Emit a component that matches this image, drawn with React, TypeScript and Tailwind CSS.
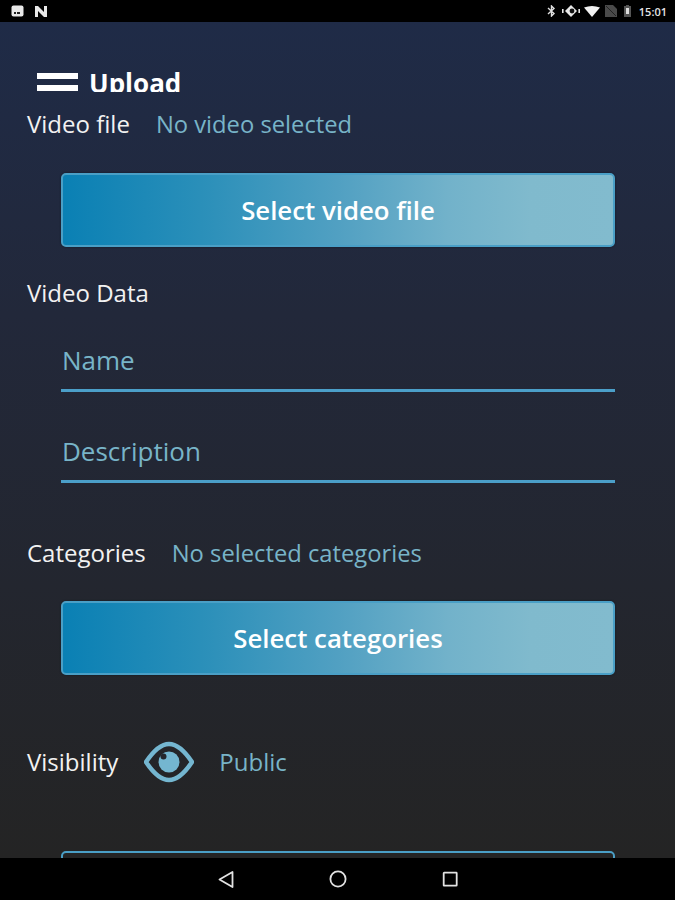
const font = { fontFamily: '"Open Sans", "Noto Sans", sans-serif' };

function StatusBar() {
  return (
    <div className="flex h-[22px] shrink-0 items-center justify-between bg-black pl-[11px] pr-[8px]">
      <div className="flex items-center gap-[10px]">
        <svg width="13" height="12" viewBox="0 0 13 12">
          <rect x="0.5" y="0.5" width="12" height="11" rx="2" fill="#e8e8e8" />
          <rect x="3" y="7" width="2" height="2" fill="#222" />
          <rect x="6" y="7" width="3" height="2" fill="#222" />
        </svg>
        <svg width="14" height="11" viewBox="0 0 14 11">
          <path d="M1 11V0h3l6 6V0h3v11h-3L4 5v6z" fill="#e8e8e8" />
        </svg>
      </div>
      <div className="flex items-center">
        <svg width="9" height="12" viewBox="0 0 9 12" fill="none" stroke="#e0e0e0" strokeWidth="1.4">
          <path d="M1 3l6 5.5L4.5 11V1L7 3.5 1 9" />
        </svg>
        <svg className="ml-[6px]" width="18" height="14" viewBox="0 0 18 14">
          <path d="M9 1l6 6-6 6-6-6z" fill="#e8e8e8" />
          <circle cx="10" cy="7" r="2.4" fill="#111" />
          <rect x="0" y="5" width="1.6" height="4" fill="#e8e8e8" />
          <rect x="16.4" y="5" width="1.6" height="4" fill="#e8e8e8" />
        </svg>
        <svg className="ml-[4px]" width="16" height="11" viewBox="0 0 16 11">
          <path d="M0 1.5Q8 -1.5 16 1.5L8 11z" fill="#f2f2f2" />
        </svg>
        <svg className="ml-[5px]" width="12" height="12" viewBox="0 0 12 12">
          <path d="M0 12V0h8l4 4v8z" fill="#4a4a4a" />
          <path d="M1 1l10 10" stroke="#222" strokeWidth="1" />
        </svg>
        <svg className="ml-[7px]" width="7" height="12" viewBox="0 0 7 12">
          <rect x="0" y="1" width="7" height="11" fill="#555" />
          <rect x="2" y="0" width="3" height="1" fill="#555" />
          <rect x="2" y="3" width="3" height="6" fill="#ddd" />
        </svg>
        <span className="ml-[8px] text-[11px] font-semibold leading-none text-[#e4e4e4]" style={font}>
          15:01
        </span>
      </div>
    </div>
  );
}

function NavBar() {
  return (
    <div className="flex h-[42px] shrink-0 items-center justify-center gap-[94px] bg-black pl-[1px]">
      <svg width="18" height="18" viewBox="0 0 18 18" fill="none" stroke="#e2e2e2" strokeWidth="1.8" strokeLinejoin="round">
        <path d="M15.5 2v15L2.5 9.5z" />
      </svg>
      <svg width="18" height="18" viewBox="0 0 18 18" fill="none" stroke="#e2e2e2" strokeWidth="1.8">
        <circle cx="9" cy="9" r="7.6" />
      </svg>
      <svg width="18" height="18" viewBox="0 0 18 18" fill="none" stroke="#e2e2e2" strokeWidth="1.8">
        <rect x="2.7" y="2.7" width="13" height="13" rx="0.5" />
      </svg>
    </div>
  );
}

function GradientButton({ label }: { label: string }) {
  return (
    <button className="flex h-[74px] w-full items-center justify-center rounded-[5px] border-2 border-[#4a9fc6] bg-[linear-gradient(90deg,#0a80b4_0%,#2a8fb9_25%,#51a0c2_50%,#72b2ca_70%,#80bacd_85%,#82bbce_100%)] text-[25.8px] font-semibold text-white shadow-[0_0_2px_#11151f]">
      {label}
    </button>
  );
}

function Field({ label }: { label: string }) {
  return (
    <div className="flex h-[60px] items-center border-b-[3px] border-[#4b9fc9] pl-px text-[26px] text-[#78b4c8]">
      {label}
    </div>
  );
}

export default function App() {
  return (
    <div className="flex h-[900px] w-[675px] flex-col overflow-hidden" style={font}>
      <StatusBar />
      <main className="flex min-h-0 flex-1 flex-col overflow-hidden bg-[linear-gradient(180deg,#1f2b47_0%,#22283a_35%,#242424_100%)]">
        <header className="flex h-[70px] shrink-0 items-end overflow-hidden pl-[37px]">
          <svg className="mb-[1px]" width="41" height="18" viewBox="0 0 41 18" fill="#fff">
            <rect width="41" height="6" />
            <rect y="12" width="41" height="6" />
          </svg>
          <span className="relative top-[4px] ml-[11px] text-[26px] font-bold leading-none text-white">Upload</span>
        </header>

        <div className="flex items-center pl-[27px] pt-[12px] text-[24px] leading-[40px]">
          <span className="text-[#f2f2f2]">Video file</span>
          <span className="ml-[26px] text-[23.75px] text-[#78b4c8]">No video selected</span>
        </div>

        <div className="pl-[61px] pr-[60px] pt-[29px]">
          <GradientButton label="Select video file" />
        </div>

        <div className="pl-[27px] pt-[26px] text-[24px] leading-[40px] text-[#f2f2f2]">Video Data</div>

        <div className="flex flex-col gap-[31px] pl-[61px] pr-[60px] pt-[19px]">
          <Field label="Name" />
          <Field label="Description" />
        </div>

        <div className="flex items-center pl-[27px] pt-[50px] text-[24px] leading-[40px]">
          <span className="text-[#f2f2f2]">Categories</span>
          <span className="ml-[26px] text-[23.75px] text-[#78b4c8]">No selected categories</span>
        </div>

        <div className="pl-[61px] pr-[60px] pt-[28px]">
          <GradientButton label="Select categories" />
        </div>

        <div className="flex items-center pl-[27px] pt-[66px] text-[24px] leading-[40px]">
          <span className="text-[#f2f2f2]">Visibility</span>
          <svg className="ml-[26px]" width="50" height="42" viewBox="0 0 50 42">
            <path d="M2 21Q14 3 25 3T48 21Q36 39 25 39T2 21z" fill="none" stroke="#74b6d0" strokeWidth="4.5" strokeLinejoin="round" />
            <circle cx="25" cy="21" r="10.5" fill="#74b6d0" />
            <circle cx="19.5" cy="15.5" r="3" fill="#24262c" />
          </svg>
          <span className="ml-[25px] text-[#78b4c8]">Public</span>
        </div>

        <div className="pl-[61px] pr-[60px] pt-[68px]">
          <div className="h-[40px] rounded-t-[5px] border-2 border-[#4a9fc6]" />
        </div>
      </main>
      <NavBar />
    </div>
  );
}
